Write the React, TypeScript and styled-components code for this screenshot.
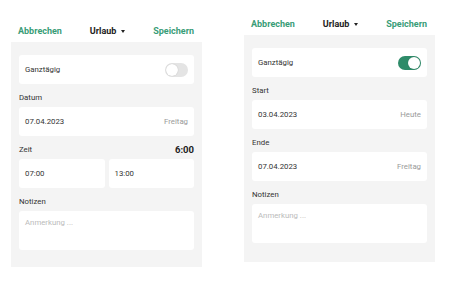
import React from 'react';
import styled, { createGlobalStyle } from 'styled-components';

const GlobalStyle = createGlobalStyle`
  body {
    margin: 0;
    background: #ffffff;
    font-family: Roboto, "Liberation Sans", sans-serif;
    color: #333333;
  }
`;

const green = '#399d77';

const Page = styled.div`
  display: flex;
  align-items: flex-start;
  gap: 42px;
  padding-left: 11px;
`;

const Screen = styled.div<{ top: number }>`
  width: 191px;
  margin-top: ${p => p.top}px;
  display: flex;
  flex-direction: column;
`;

const Header = styled.div`
  height: 22px;
  display: flex;
  align-items: center;
  justify-content: space-between;
  padding: 0 8px 0 7px;
`;

const HeaderLink = styled.span`
  color: ${green};
  font-size: 9px;
  font-weight: 700;
`;

const Title = styled.span`
  display: flex;
  align-items: center;
  gap: 5px;
  color: #222222;
  font-size: 9px;
  font-weight: 700;
`;

const Caret = styled.span`
  width: 0;
  height: 0;
  border-left: 2.5px solid transparent;
  border-right: 2.5px solid transparent;
  border-top: 3px solid #222222;
`;

const Body = styled.div<{ bottom: number }>`
  background: #f4f4f4;
  padding: 13px 8px ${p => p.bottom}px;
  display: flex;
  flex-direction: column;
`;

const Card = styled.div<{ tall?: boolean }>`
  background: #ffffff;
  border-radius: 3px;
  height: ${p => (p.tall ? 39 : 29)}px;
  flex-shrink: 0;
  box-sizing: border-box;
  padding: ${p => (p.tall ? '7px 6px' : '0 6px')};
  display: flex;
  align-items: ${p => (p.tall ? 'flex-start' : 'center')};
  justify-content: space-between;
  font-size: 7.8px;
`;

const LabelRow = styled.div`
  display: flex;
  align-items: center;
  justify-content: space-between;
  height: 10px;
  margin: 8px 0 5px;
  font-size: 7.8px;
  color: #333333;
`;

const Duration = styled.span`
  font-size: 9.5px;
  font-weight: 700;
  color: #222222;
`;

const Muted = styled.span<{ light?: boolean }>`
  color: ${p => (p.light ? '#bbbbbb' : '#9a9a9a')};
`;

const Row = styled.div`
  display: flex;
  gap: 4px;

  & > * {
    flex: 1;
  }
`;

const Toggle = styled.div<{ on?: boolean }>`
  width: 23px;
  height: 14px;
  border-radius: 7px;
  box-sizing: border-box;
  padding: 1px;
  background: ${p => (p.on ? '#2e8b69' : '#e4e4e4')};
  display: flex;
  justify-content: ${p => (p.on ? 'flex-end' : 'flex-start')};
`;

const Knob = styled.div`
  width: 12px;
  height: 12px;
  border-radius: 50%;
  background: #ffffff;
  box-shadow: 0 0 1px rgba(0, 0, 0, 0.25);
`;

function TopBar() {
  return (
    <Header>
      <HeaderLink>Abbrechen</HeaderLink>
      <Title>
        Urlaub
        <Caret />
      </Title>
      <HeaderLink>Speichern</HeaderLink>
    </Header>
  );
}

function Notes() {
  return (
    <>
      <LabelRow>Notizen</LabelRow>
      <Card tall>
        <Muted light>Anmerkung ...</Muted>
      </Card>
    </>
  );
}

export default function App() {
  return (
    <Page>
      <GlobalStyle />
      <Screen top={20}>
        <TopBar />
        <Body bottom={17}>
          <Card>
            <span>Ganztägig</span>
            <Toggle>
              <Knob />
            </Toggle>
          </Card>
          <LabelRow>Datum</LabelRow>
          <Card>
            <span>07.04.2023</span>
            <Muted>Freitag</Muted>
          </Card>
          <LabelRow>
            <span>Zeit</span>
            <Duration>6:00</Duration>
          </LabelRow>
          <Row>
            <Card>
              <span>07:00</span>
            </Card>
            <Card>
              <span>13:00</span>
            </Card>
          </Row>
          <Notes />
        </Body>
      </Screen>
      <Screen top={13}>
        <TopBar />
        <Body bottom={19}>
          <Card>
            <span>Ganztägig</span>
            <Toggle on>
              <Knob />
            </Toggle>
          </Card>
          <LabelRow>Start</LabelRow>
          <Card>
            <span>03.04.2023</span>
            <Muted>Heute</Muted>
          </Card>
          <LabelRow>Ende</LabelRow>
          <Card>
            <span>07.04.2023</span>
            <Muted>Freitag</Muted>
          </Card>
          <Notes />
        </Body>
      </Screen>
    </Page>
  );
}
